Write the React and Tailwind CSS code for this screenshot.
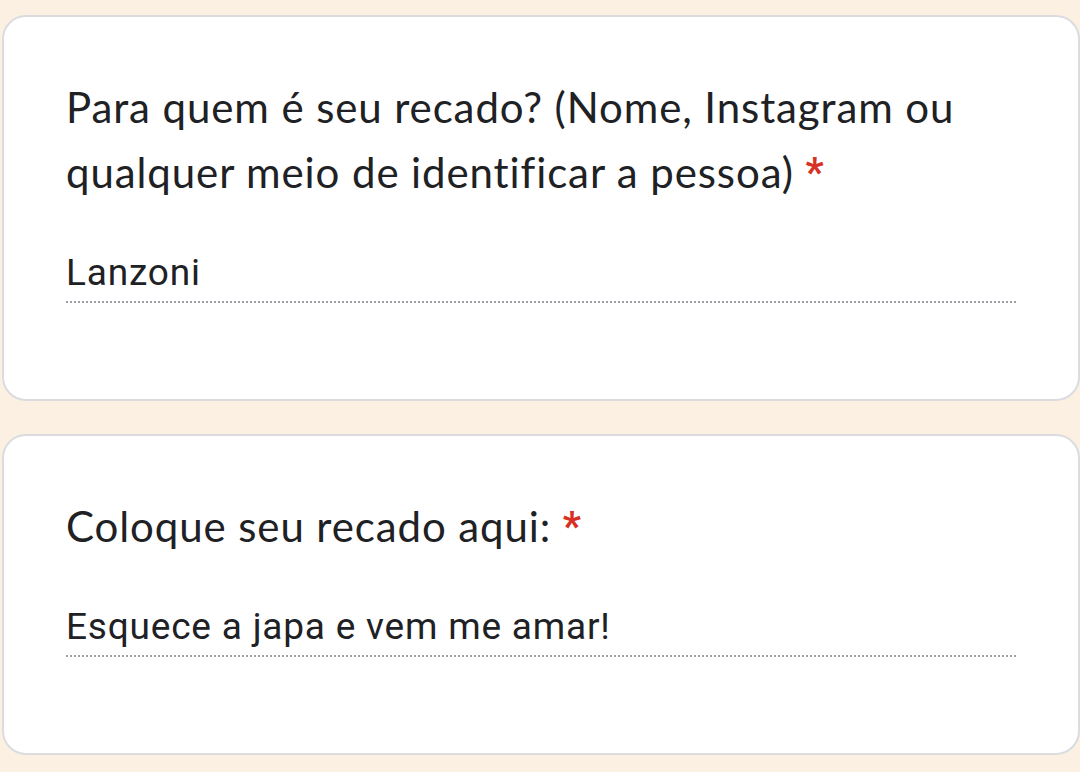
import React from 'react';

const TITLE_FONT = { fontFamily: 'Lato, "Open Sans", sans-serif' };

function QuestionCard({ title, answer, height }) {
  return (
    <div className={`bg-white border-2 border-[#dadce0] rounded-[24px] pl-[62px] pt-[58px] ${height}`}>
      <h2 className="text-[42px] leading-[65px] tracking-[0.9px] text-[#202124] pr-[40px]" style={TITLE_FONT}>
        {title}{' '}
        <span className="text-[#d93025] font-bold font-['Roboto',sans-serif] text-[40px] align-top">*</span>
      </h2>
      <div className="mt-[44px] w-[950px] border-b-2 border-dotted border-[#9aa0a6] pb-[4px]">
        <p className="text-[37px] leading-[48px] tracking-[0.8px] text-[#202124] font-['Roboto',sans-serif]">{answer}</p>
      </div>
    </div>
  );
}

export default function App() {
  return (
    <div className="min-h-[772px] bg-[#fbf0e2] pt-[15px] pl-[2px] flex flex-col gap-[33px]">
      <QuestionCard
        title="Para quem é seu recado? (Nome, Instagram ou qualquer meio de identificar a pessoa)"
        answer="Lanzoni"
        height="h-[386px]"
      />
      <QuestionCard
        title="Coloque seu recado aqui:"
        answer="Esquece a japa e vem me amar!"
        height="h-[321px]"
      />
    </div>
  );
}
